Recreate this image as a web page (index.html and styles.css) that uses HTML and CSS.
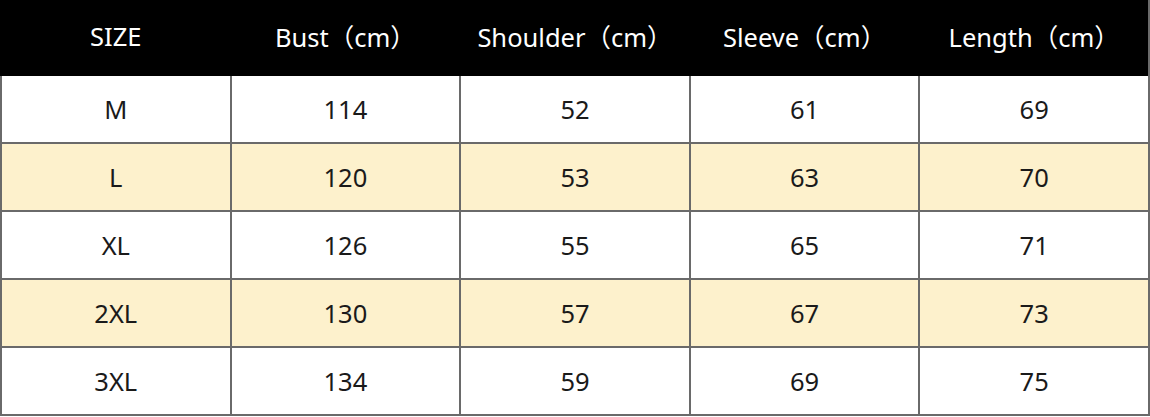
FILE: index.html
```html
<!DOCTYPE html>
<html>
<head>
<meta charset="utf-8">
<link rel="stylesheet" href="styles.css">
</head>
<body>
<table class="size-table">
  <thead>
    <tr><th>SIZE</th><th>Bust（cm）</th><th>Shoulder（cm）</th><th>Sleeve（cm）</th><th>Length（cm）</th></tr>
  </thead>
  <tbody>
    <tr><td>M</td><td>114</td><td>52</td><td>61</td><td>69</td></tr>
    <tr class="alt"><td>L</td><td>120</td><td>53</td><td>63</td><td>70</td></tr>
    <tr><td>XL</td><td>126</td><td>55</td><td>65</td><td>71</td></tr>
    <tr class="alt"><td>2XL</td><td>130</td><td>57</td><td>67</td><td>73</td></tr>
    <tr><td>3XL</td><td>134</td><td>59</td><td>69</td><td>75</td></tr>
  </tbody>
</table>
</body>
</html>
```
FILE: styles.css
```css
html, body {
  margin: 0;
  padding: 0;
  background: #ffffff;
}
.size-table {
  width: 1150px;
  border-collapse: collapse;
  table-layout: fixed;
  font-family: "Noto Sans", "Noto Sans CJK SC", sans-serif;
  font-size: 25.5px;
  color: #1a1a1a;
}
.size-table th {
  background: #000000;
  color: #ffffff;
  font-weight: normal;
  height: 76px;
  padding: 0 0 5px 0;
  box-sizing: border-box;
  text-align: center;
  vertical-align: middle;
  border-right: 2px solid #000;
}
.size-table th:first-child {
  border-left: 2px solid #000;
}
.size-table th:last-child {
  border-right: 2px solid #6a6a6a;
}
.size-table td {
  height: 66px;
  padding: 0;
  text-align: center;
  vertical-align: middle;
  border: 2px solid #6a6a6a;
  border-top: none;
}
.size-table tr.alt td {
  background: #fdf1cc;
}
```
